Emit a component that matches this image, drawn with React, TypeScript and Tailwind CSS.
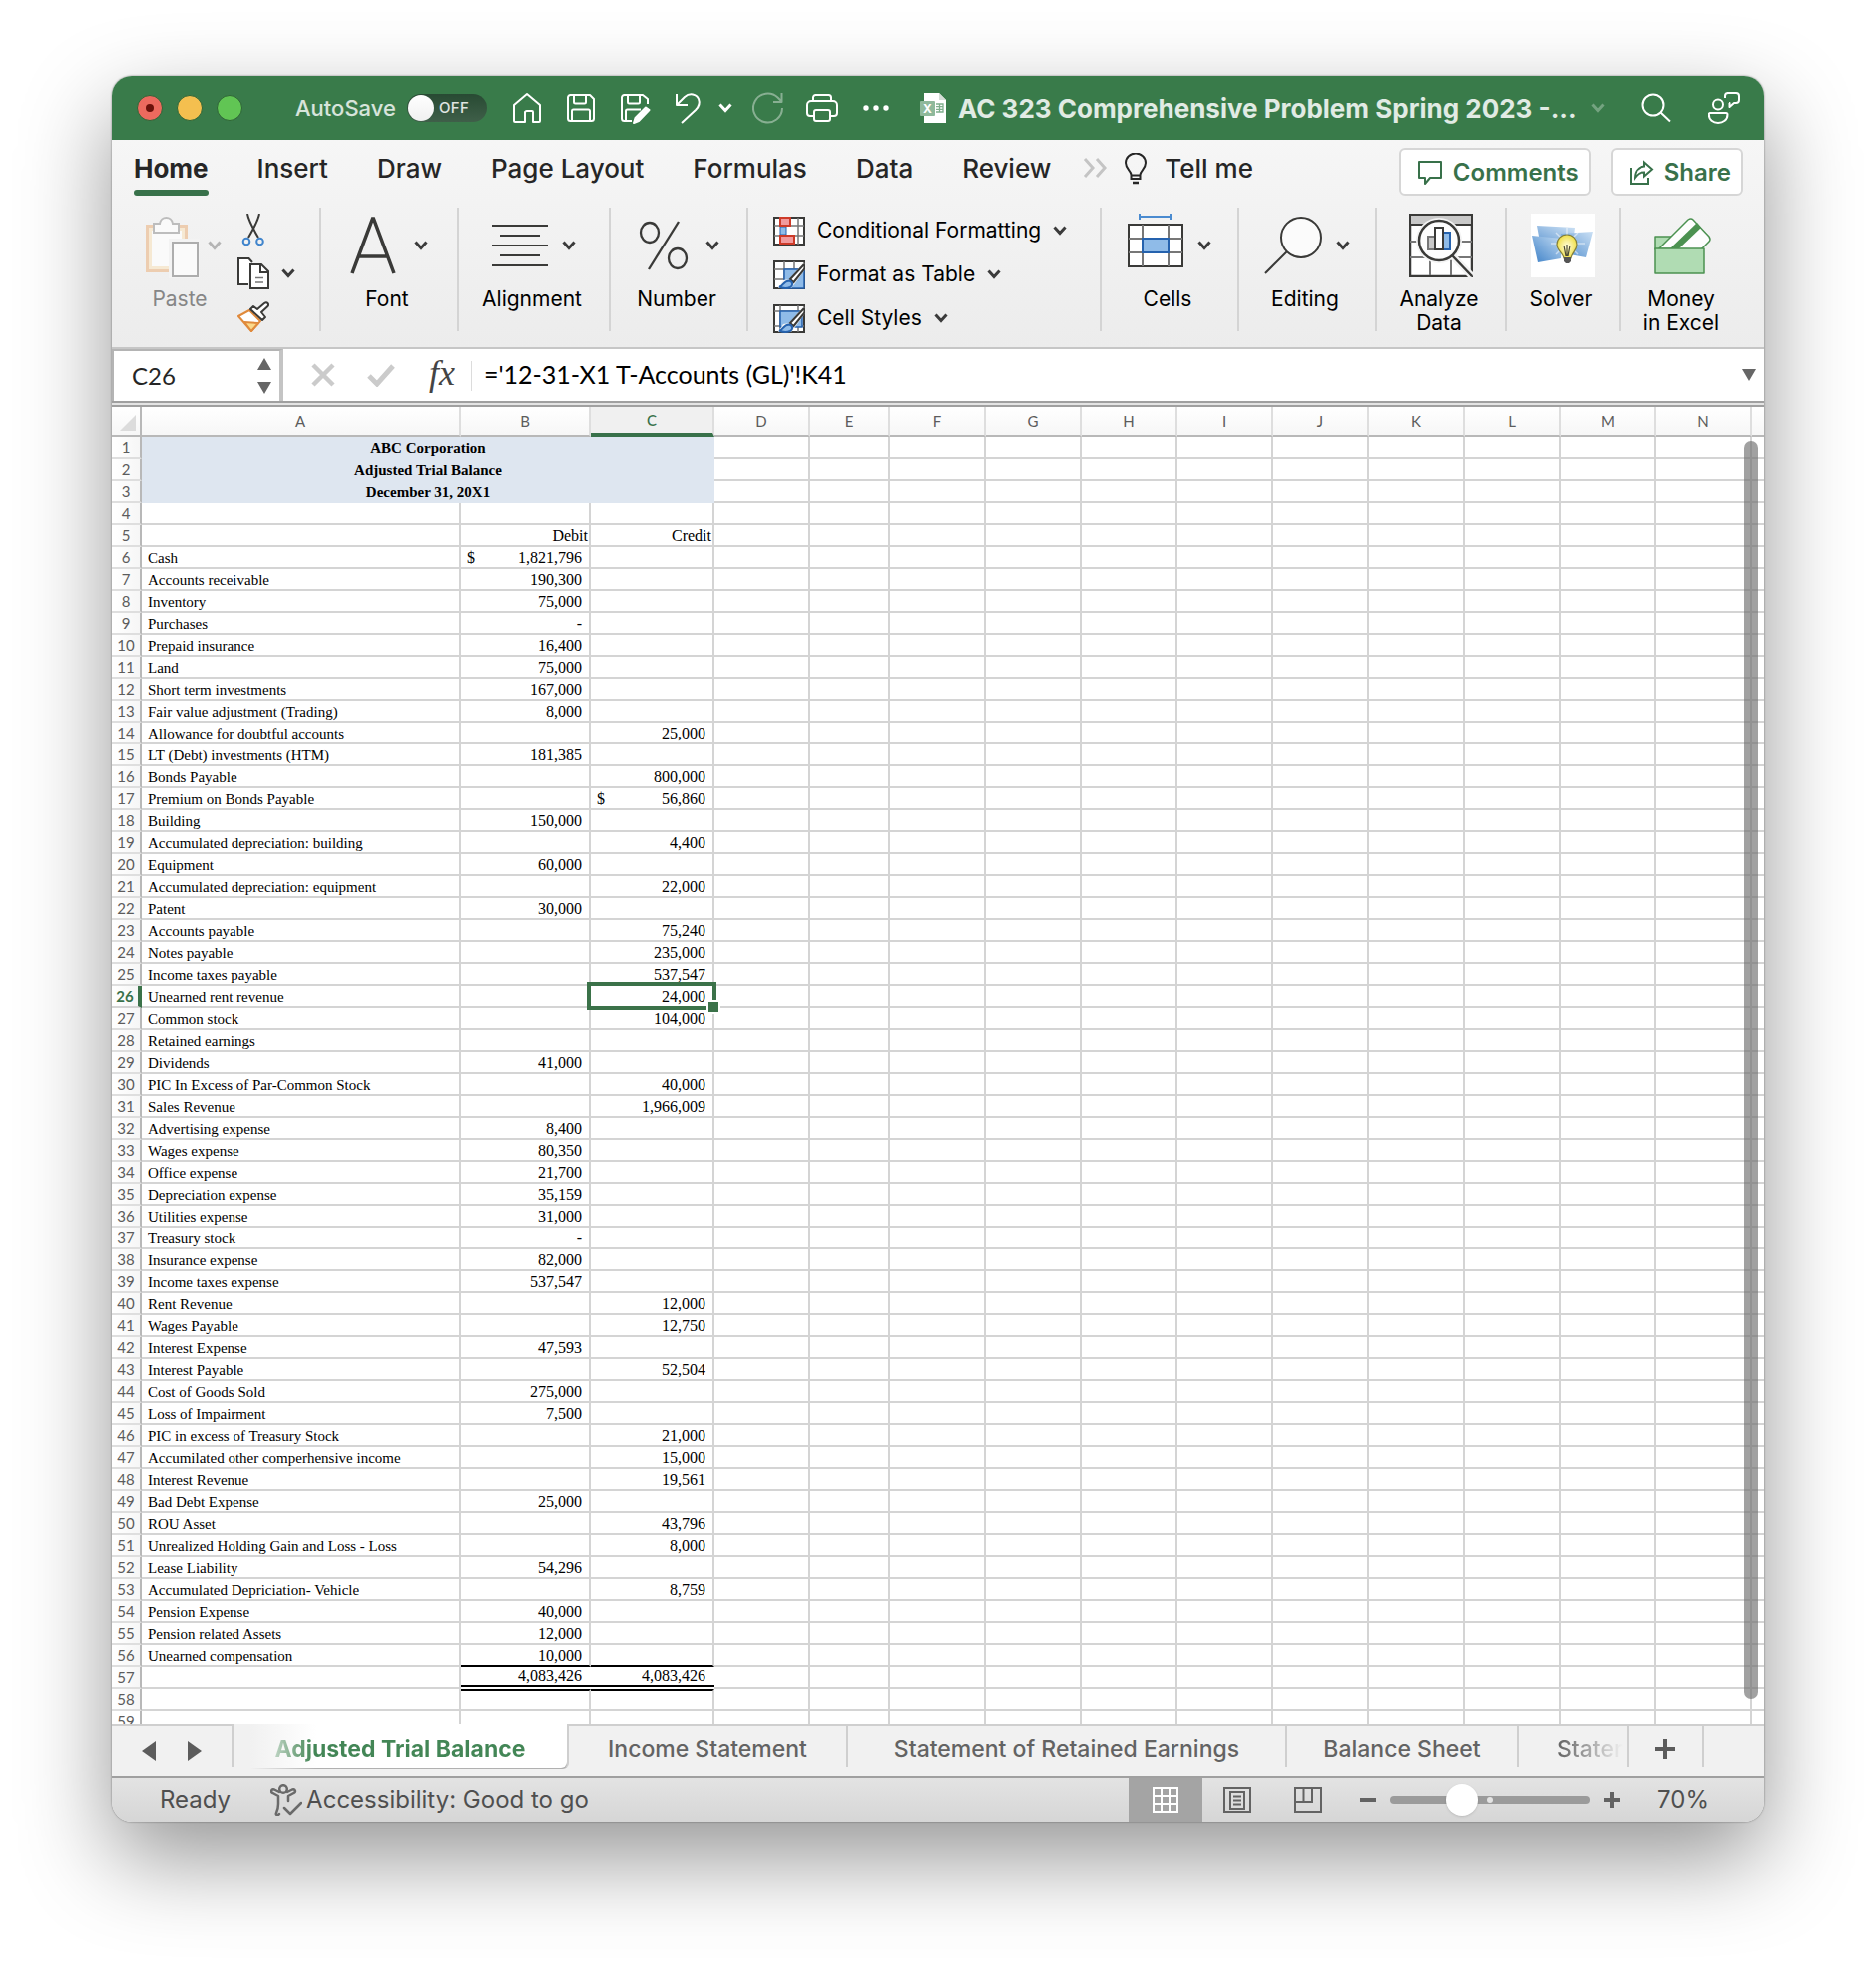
import type { ReactNode } from 'react'

type Entry = {
  label?: string
  debit?: string
  credit?: string
  debitSign?: boolean
  creditSign?: boolean
}

const entries: Entry[] = [
  { label: 'Cash', debit: '1,821,796', debitSign: true },
  { label: 'Accounts receivable', debit: '190,300' },
  { label: 'Inventory', debit: '75,000' },
  { label: 'Purchases', debit: '-' },
  { label: 'Prepaid insurance', debit: '16,400' },
  { label: 'Land', debit: '75,000' },
  { label: 'Short term investments', debit: '167,000' },
  { label: 'Fair value adjustment (Trading)', debit: '8,000' },
  { label: 'Allowance for doubtful accounts', credit: '25,000' },
  { label: 'LT (Debt) investments (HTM)', debit: '181,385' },
  { label: 'Bonds Payable', credit: '800,000' },
  { label: 'Premium on Bonds Payable', credit: '56,860', creditSign: true },
  { label: 'Building', debit: '150,000' },
  { label: 'Accumulated depreciation: building', credit: '4,400' },
  { label: 'Equipment', debit: '60,000' },
  { label: 'Accumulated depreciation: equipment', credit: '22,000' },
  { label: 'Patent', debit: '30,000' },
  { label: 'Accounts payable', credit: '75,240' },
  { label: 'Notes payable', credit: '235,000' },
  { label: 'Income taxes payable', credit: '537,547' },
  { label: 'Unearned rent revenue', credit: '24,000' },
  { label: 'Common stock', credit: '104,000' },
  { label: 'Retained earnings' },
  { label: 'Dividends', debit: '41,000' },
  { label: 'PIC In Excess of Par-Common Stock', credit: '40,000' },
  { label: 'Sales Revenue', credit: '1,966,009' },
  { label: 'Advertising expense', debit: '8,400' },
  { label: 'Wages expense', debit: '80,350' },
  { label: 'Office expense', debit: '21,700' },
  { label: 'Depreciation expense', debit: '35,159' },
  { label: 'Utilities expense', debit: '31,000' },
  { label: 'Treasury stock', debit: '-' },
  { label: 'Insurance expense', debit: '82,000' },
  { label: 'Income taxes expense', debit: '537,547' },
  { label: 'Rent Revenue', credit: '12,000' },
  { label: 'Wages Payable', credit: '12,750' },
  { label: 'Interest Expense', debit: '47,593' },
  { label: 'Interest Payable', credit: '52,504' },
  { label: 'Cost of Goods Sold', debit: '275,000' },
  { label: 'Loss of Impairment', debit: '7,500' },
  { label: 'PIC in excess of Treasury Stock', credit: '21,000' },
  { label: 'Accumilated other comperhensive income', credit: '15,000' },
  { label: 'Interest Revenue', credit: '19,561' },
  { label: 'Bad Debt Expense', debit: '25,000' },
  { label: 'ROU Asset', credit: '43,796' },
  { label: 'Unrealized Holding Gain and Loss - Loss', credit: '8,000' },
  { label: 'Lease Liability', debit: '54,296' },
  { label: 'Accumulated Depriciation- Vehicle', credit: '8,759' },
  { label: 'Pension Expense', debit: '40,000' },
  { label: 'Pension related Assets', debit: '12,000' },
  { label: 'Unearned compensation', debit: '10,000' },
]

const titles = ['ABC Corporation', 'Adjusted Trial Balance', 'December 31, 20X1']
const columns = ['A', 'B', 'C', 'D', 'E', 'F', 'G', 'H', 'I', 'J', 'K', 'L', 'M', 'N']
const columnWidths = [
  'w-[320px]', 'w-[130px]', 'w-[124px]', 'w-[96px]', 'w-[80px]', 'w-[96px]', 'w-[96px]',
  'w-[96px]', 'w-[96px]', 'w-[96px]', 'w-[96px]', 'w-[96px]', 'w-[96px]', 'w-[96px]',
]

const SELECTED_ROW = 26
const TOTAL_ROW = 57

function Chevron({ className = 'text-[#3b3b3b]' }: { className?: string }) {
  return (
    <svg viewBox="0 0 14 10" className={`h-2.5 w-3.5 shrink-0 ${className}`} fill="none" stroke="currentColor" strokeWidth="3">
      <path d="M1.5 1.5 7 7.5l5.5-6" />
    </svg>
  )
}

/* ---------- title bar ---------- */

function TitleIcon({ label, className = '', children }: { label: string; className?: string; children: ReactNode }) {
  return (
    <button type="button" aria-label={label} className={`shrink-0 ${className}`}>
      <svg viewBox="0 0 32 32" className="size-8" fill="none" stroke="currentColor" strokeWidth="2" strokeLinejoin="round">
        {children}
      </svg>
    </button>
  )
}

function TitleBar() {
  return (
    <header className="flex h-16 items-center bg-[#397b4a] pr-6 pl-[25px] text-white">
      <div className="flex gap-[14px]">
        <button type="button" aria-label="Close" className="flex size-[26px] items-center justify-center rounded-full border border-[#2f6437] bg-[#ec6a5e]">
          <span className="size-2 rounded-full bg-[#6b110a]" />
        </button>
        <button type="button" aria-label="Minimize" className="size-[26px] rounded-full border border-[#2f6437] bg-[#f4bf4f]" />
        <button type="button" aria-label="Zoom" className="size-[26px] rounded-full border border-[#2f6437] bg-[#61c554]" />
      </div>
      <span className="ml-[53px] text-[22px] font-medium text-white/80">AutoSave</span>
      <button
        type="button"
        role="switch"
        aria-checked="false"
        aria-label="AutoSave"
        className="ml-[11px] flex h-7 w-20 shrink-0 items-center rounded-full bg-linear-to-b from-[#284a33] to-[#3f5f49] px-px"
      >
        <span className="size-[26px] rounded-full bg-linear-to-b from-white to-[#f0f0f0]" />
        <span className="ml-[5px] text-[15px] font-medium tracking-wide text-white/85">OFF</span>
      </button>
      <div className="ml-6 flex items-center gap-[22px]">
        <TitleIcon label="Home">
          <path d="M3 13 16 2l13 11v16a1 1 0 0 1-1 1h-6V20a1 1 0 0 0-1-1h-5a2 2 0 0 0-2 1v10H4a1 1 0 0 1-1-1z" />
        </TitleIcon>
        <TitleIcon label="Save">
          <path d="M3 5.500a2.500 2.500 0 0 1 2.500-2.500H25l4 4v19.500a2.500 2.500 0 0 1-2.500 2.500h-21A2.500 2.500 0 0 1 3 26.500z" />
          <path d="M9 3v7a1.500 1.500 0 0 0 1.500 1.500h9A1.500 1.500 0 0 0 21 10V3M7 29V19a1.500 1.500 0 0 1 1.500-1.500h15A1.500 1.500 0 0 1 25 19v10" />
        </TitleIcon>
        <TitleIcon label="Save as">
          <path d="M13 29H5.500A2.500 2.500 0 0 1 3 26.500v-21A2.500 2.500 0 0 1 5.500 3H24l5 4v5" />
          <path d="M9 3v7a1.500 1.500 0 0 0 1.500 1.500h9A1.500 1.500 0 0 0 21 10V3M7 29V19a1.500 1.500 0 0 1 1.500-1.500H22" />
          <path d="M27 15.500 30.500 18 20 29l-5 2 1.500-5z" fill="currentColor" />
        </TitleIcon>
        <TitleIcon label="Undo">
          <path d="M4 2v11h11M4.500 12.500 12 5c5-4.500 12-3 14 2s0 8-3 11L9 31" />
        </TitleIcon>
      </div>
      <Chevron className="ml-[14px] text-white" />
      <div className="ml-5 flex items-center gap-[22px]">
        <TitleIcon label="Redo" className="text-white/40">
          <path d="M30 16A14.500 14.500 0 1 1 25.500 5.500L29 9M29.500 1v9H21" />
        </TitleIcon>
        <TitleIcon label="Print">
          <path d="M8 24H4a3 3 0 0 1-3-3v-8a4 4 0 0 1 4-4h22a4 4 0 0 1 4 4v8a3 3 0 0 1-3 3h-4" />
          <path d="M7 9V5.500A2.500 2.500 0 0 1 9.500 3h13A2.500 2.500 0 0 1 25 5.500V9M8 20a2 2 0 0 1 2-2h12a2 2 0 0 1 2 2v7a2 2 0 0 1-2 2H10a2 2 0 0 1-2-2z" />
        </TitleIcon>
        <TitleIcon label="More commands">
          <g fill="currentColor" stroke="none">
            <circle cx="6" cy="16" r="2.700" />
            <circle cx="16" cy="16" r="2.700" />
            <circle cx="26" cy="16" r="2.700" />
          </g>
        </TitleIcon>
      </div>
      <svg viewBox="0 0 26 30" className="ml-7 h-[30px] w-[26px] shrink-0">
        <path d="M4 0h15l7 7v23H4z" fill="#fff" />
        <path d="M19 0v7h7z" fill="#d5ddd7" />
        <path d="M16 11h7v8h-7M16 13.700h7M16 16.400h7M19.500 11v8" stroke="#7fae8c" strokeWidth="1.300" fill="none" />
        <rect y="8" width="15" height="15" rx="1" fill="#8fb99b" />
        <text x="7.500" y="20" textAnchor="middle" fontSize="12" fontWeight="700" fill="#fff">X</text>
      </svg>
      <h1 className="ml-3 min-w-0 truncate text-[26px] font-bold text-white/85">AC 323 Comprehensive Problem Spring 2023 -...</h1>
      <Chevron className="ml-[14px] text-white/30" />
      <div className="ml-auto flex items-center gap-9 pl-6">
        <TitleIcon label="Search">
          <circle cx="13" cy="13" r="10.500" />
          <path d="m20.500 20.500 9.500 9" />
        </TitleIcon>
        <TitleIcon label="Collaborate">
          <circle cx="10" cy="12.500" r="5" />
          <path d="M2 21h16a1.500 1.500 0 0 1 1.500 1.500C19.500 28 15 31 10 31S.800 28 .800 22.500A1.500 1.500 0 0 1 2 21zM19 1h9a3 3 0 0 1 3 3v4a3 3 0 0 1-3 3h-2l-4.500 4v-4H21M17 6V4a3 3 0 0 1 3-3" />
        </TitleIcon>
      </div>
    </header>
  )
}

/* ---------- ribbon ---------- */

const ribbonTabs = ['Insert', 'Draw', 'Page Layout', 'Formulas', 'Data', 'Review']

function RibbonTabs() {
  return (
    <div className="flex h-14 items-start pr-[21px]">
      <nav className="flex items-center gap-[49px] pl-[22px] text-[26px] leading-[58px] font-medium text-[#262626]">
        <button type="button" className="relative font-bold">
          Home
          <span className="absolute inset-x-0 bottom-[2px] h-[6px] rounded-full bg-[#38714a]" />
        </button>
        {ribbonTabs.map((tab) => (
          <button key={tab} type="button" className="whitespace-nowrap">
            {tab}
          </button>
        ))}
      </nav>
      <button type="button" aria-label="More tabs" className="mt-[18px] ml-8 text-[#c4c4c4]">
        <svg viewBox="0 0 24 20" className="h-5 w-6" fill="none" stroke="currentColor" strokeWidth="3">
          <path d="m2 1 8 9-8 9M14 1l8 9-8 9" />
        </svg>
      </button>
      <button type="button" className="ml-[18px] flex items-center gap-[18px] text-[26px] leading-[58px] font-medium whitespace-nowrap text-[#262626]">
        <svg viewBox="0 0 22 32" className="h-8 w-[22px]" fill="none" stroke="#262626" strokeWidth="2">
          <path d="M6.500 22c0-4-5.500-6-5.500-12a10 9.500 0 0 1 20 0c0 6-5.500 8-5.500 12v4h-9zM6.500 22.500h9" />
          <path d="M8 30h6" strokeWidth="2.500" />
        </svg>
        Tell me
      </button>
      <div className="mt-2 ml-auto flex gap-5 text-[24px] font-semibold text-[#38714a]">
        <button type="button" className="flex h-12 items-center gap-[10px] rounded-md border-2 border-[#d6d6d6] bg-white pt-[2px] pr-[10px] pl-4">
          <svg viewBox="0 0 26 26" className="size-[26px]" fill="none" stroke="currentColor" strokeWidth="2">
            <path d="M2 2h22v16H13l-5 6v-6H2z" strokeLinejoin="round" />
          </svg>
          Comments
        </button>
        <button type="button" className="flex h-12 items-center gap-[10px] rounded-md border-2 border-[#d6d6d6] bg-white pt-[2px] pr-[10px] pl-4">
          <svg viewBox="0 0 26 26" className="size-[26px]" fill="none" stroke="currentColor" strokeWidth="2">
            <path d="M2 8v16h18v-6" />
            <path d="M16 2.500 24 9.500l-8 7v-4C11 12.500 9 14 6 18c0-7 4-11 10-11.500z" />
          </svg>
          Share
        </button>
      </div>
    </div>
  )
}

type GroupProps = {
  width: string
  label: string
  menu?: boolean
  last?: boolean
  children: ReactNode
}

function RibbonGroup({ width, label, menu, last, children }: GroupProps) {
  return (
    <div className={`flex shrink-0 justify-center ${width} ${last ? '' : 'border-r-2 border-[#d4d4d4]'}`}>
      <button type="button" className="flex flex-col items-center pt-[6px]">
        <span className="flex h-16 shrink-0 items-center gap-[14px]">
          {children}
          {menu && <Chevron />}
        </span>
        <span className="mt-[10px] mr-1 text-[21px] leading-6 whitespace-pre-line text-black">{label}</span>
      </button>
    </div>
  )
}

function BrushOverlay() {
  return (
    <>
      <path d="M31 4 16 21l-6 1-5 8h13l4-5L32 11z" fill="#f3f3f3" />
      <path d="M30.500 6.500 17 21l3.500 3L31 11c1-2 .500-4-.500-4.500z" fill="#fff" stroke="#3a3a38" strokeWidth="2" />
      <path d="M6 28.500c4 0 4-6 10-6 4 1 4 5 1 6.500-4 1.800-8 1-11-.500z" fill="#8fbbe8" stroke="#2562ae" strokeWidth="2" />
    </>
  )
}

const styleMenus = [
  {
    label: 'Conditional Formatting',
    icon: (
      <>
        <path d="M1 3h30v27H1z" fill="#fff" stroke="#3a3a38" strokeWidth="2" />
        <path d="M1 11h30M1 21h30M25 3v27" stroke="#777" strokeWidth="1.500" />
        <path d="M7 12h6v8H7z" fill="#8fbbe8" stroke="#2562ae" strokeWidth="1" />
        <path d="M7 3h10v8H7zM7 21h14v8H7z" fill="#f19a9d" stroke="#cd3a28" strokeWidth="2" />
      </>
    ),
  },
  {
    label: 'Format as Table',
    icon: (
      <>
        <path d="M1 3h30v27H1z" fill="#fff" stroke="#3a3a38" strokeWidth="2" />
        <path d="M1 11h30M1 21h10M11 3v27M21 3v8" stroke="#777" strokeWidth="1.500" />
        <path d="M11 11h20v19H11z" fill="#8fbbe8" stroke="#2562ae" strokeWidth="1.500" />
        <BrushOverlay />
      </>
    ),
  },
  {
    label: 'Cell Styles',
    icon: (
      <>
        <path d="M1 3h30v27H1z" fill="#fff" stroke="#3a3a38" strokeWidth="2" />
        <path d="M1 9h30M1 24h30M7 3v27M25 3v27" stroke="#777" strokeWidth="1.500" />
        <path d="M7 9h22v16H7z" fill="#8fbbe8" stroke="#2562ae" strokeWidth="1.500" />
        <BrushOverlay />
      </>
    ),
  },
]

function Ribbon() {
  return (
    <div className="mt-3 flex h-[124px]">
      <div className="flex w-[210px] shrink-0 border-r-2 border-[#d4d4d4] pl-[34px]">
        <button type="button" className="flex w-[76px] flex-col items-center pt-[6px]">
          <span className="flex h-16 shrink-0 items-center gap-2">
            <svg viewBox="0 0 54 62" className="mt-1 h-[62px] w-[54px]" fill="none">
              <path d="M1.500 9.500h39v45h-39z" fill="#f6e9d3" stroke="#edcdb0" strokeWidth="3" />
              <path d="M6 14h30v36H6z" fill="#fafafa" />
              <path d="M8 7h6c1-8 12-8 13 0h6v9H8z" fill="#fafafa" stroke="#bdbdbd" strokeWidth="2" />
              <path d="M23 22h31v40H23z" fill="#f3f3f3" />
              <path d="M27 26h25v34H27z" fill="#fafafa" stroke="#adadad" strokeWidth="2" />
            </svg>
            <Chevron className="text-[#b4b4b4]" />
          </span>
          <span className="mt-[10px] mr-2 text-[21px] leading-6 text-[#868686]">Paste</span>
        </button>
        <div className="ml-4 flex flex-col items-start gap-3 pt-[6px]">
          <button type="button" aria-label="Cut" className="h-8">
            <svg viewBox="0 0 32 32" className="size-8" fill="none" strokeWidth="2">
              <path d="M10 0c1 6 4 12 11 24M22 0c-1 6-4 12-11 24" stroke="#3a3a38" />
              <circle cx="9" cy="28" r="3.300" stroke="#4185cc" />
              <circle cx="22.500" cy="28" r="3.300" stroke="#4185cc" />
            </svg>
          </button>
          <button type="button" aria-label="Copy" className="flex h-8 items-center gap-3">
            <svg viewBox="0 0 32 32" className="size-8" fill="#fff" stroke="#3a3a38" strokeWidth="2">
              <path d="M15 5 11.500 1H1v26h10" />
              <path d="M13 7h11l7 7v17H13z" />
              <path d="M23 7v8h8" fill="none" />
              <path d="M18 20.500h8M18 25h8" strokeWidth="1.500" stroke="#777" />
            </svg>
            <Chevron />
          </button>
          <button type="button" aria-label="Format painter" className="h-8">
            <svg viewBox="0 0 32 32" className="size-8" strokeWidth="2" strokeLinejoin="round">
              <path d="M12 9 1 15l13 15 9-10z" fill="#fff" stroke="#e08a3c" />
              <path d="m7 21 7 9 7-8z" fill="#fbd98b" stroke="#e08a3c" />
              <path d="m13 8 3-3 4 3 7-6c3-2 5 1 3.500 3L24 11l4 5-3 3z" fill="#fff" stroke="#3a3a38" />
            </svg>
          </button>
        </div>
      </div>
      <RibbonGroup width="w-[138px]" label="Font" menu>
        <svg viewBox="0 0 50 58" className="h-[58px] w-[50px]" fill="none" stroke="#3a3a38" strokeWidth="3.500">
          <path d="M2 57 22.500 2h1L44 57M8.500 40h29" />
        </svg>
      </RibbonGroup>
      <RibbonGroup width="w-[152px]" label="Alignment" menu>
        <svg viewBox="0 0 56 44" className="h-11 w-14" fill="none" stroke="#3a3a38" strokeWidth="2">
          <path d="M0 2h56M8 12h40M0 22h56M8 32h40M0 42h56" />
        </svg>
      </RibbonGroup>
      <RibbonGroup width="w-[138px]" label="Number" menu>
        <svg viewBox="-1 0 54 50" className="h-[50px] w-[54px]" fill="none" stroke="#3a3a38" strokeWidth="2.300">
          <ellipse cx="11" cy="12" rx="9" ry="10" />
          <ellipse cx="39" cy="38" rx="9" ry="10" />
          <path d="M40 1 10 49" />
        </svg>
      </RibbonGroup>
      <div className="flex w-[354px] shrink-0 flex-col items-start gap-3 border-r-2 border-[#d4d4d4] pt-[7px] pl-[25px]">
        {styleMenus.map((menu) => (
          <button key={menu.label} type="button" className="flex h-8 items-center gap-3 text-[21px] whitespace-nowrap text-black">
            <svg viewBox="0 0 32 32" className="size-8" fill="none">
              {menu.icon}
            </svg>
            {menu.label}
            <Chevron />
          </button>
        ))}
      </div>
      <RibbonGroup width="w-[138px]" label="Cells" menu>
        <svg viewBox="0 0 56 64" className="h-16 w-14" fill="none">
          <path d="M12 3h31M12 0v6M43 0v6" stroke="#4a8bd0" strokeWidth="2" />
          <path d="M1 11h54v42H1z" fill="#fff" stroke="#3a3a38" strokeWidth="2" />
          <path d="M1 25h54M1 39h54M15 11v42M41 11v42" stroke="#777" strokeWidth="2" />
          <path d="M15 25h26v14H15z" fill="#8fbbe8" stroke="#2562ae" strokeWidth="2" />
        </svg>
      </RibbonGroup>
      <RibbonGroup width="w-[138px]" label="Editing" menu>
        <svg viewBox="0 0 58 58" className="size-[58px]" fill="none" stroke="#3a3a38" strokeWidth="2">
          <circle cx="37" cy="21" r="20" fill="#fbfbfb" />
          <path d="M23 35 1 57" />
        </svg>
      </RibbonGroup>
      <RibbonGroup width="w-[130px]" label={'Analyze\nData'}>
        <svg viewBox="0 0 64 64" className="size-16" fill="none">
          <path d="M1 1h62v62H1z" fill="#fff" stroke="#3a3a38" strokeWidth="2.500" />
          <path d="M2 2h60v8H2z" fill="#c8c8c8" />
          <path d="M1 11h62" stroke="#3a3a38" strokeWidth="2" />
          <path d="M1 28h62M1 44h62M21 44v18M42 44v18" stroke="#777" strokeWidth="2" />
          <circle cx="30" cy="27" r="23" fill="#f3f3f3" />
          <path d="m42 41 21 22" stroke="#f3f3f3" strokeWidth="7" />
          <circle cx="30" cy="27" r="20" fill="#fdfdfd" stroke="#3a3a38" strokeWidth="2.500" />
          <path d="m43 42 20 21" stroke="#3a3a38" strokeWidth="2.500" />
          <path d="M19 23h7v13h-7z" fill="#c8c8c8" stroke="#777" strokeWidth="2" />
          <path d="M34 19h7v17h-7z" fill="#8fbbe8" stroke="#2562ae" strokeWidth="2" />
          <path d="M26 14h8v22h-8z" fill="#fff" stroke="#3a3a38" strokeWidth="2" />
        </svg>
      </RibbonGroup>
      <RibbonGroup width="w-[114px]" label="Solver">
        <svg viewBox="0 0 64 64" className="size-16">
          <defs>
            <linearGradient id="panel" x1="0" y1="1" x2="1" y2="0">
              <stop offset="0" stopColor="#3f82c8" />
              <stop offset="1" stopColor="#c4dcf3" />
            </linearGradient>
            <radialGradient id="bulb">
              <stop offset="0" stopColor="#fffde0" />
              <stop offset="1" stopColor="#f0e04c" />
            </radialGradient>
          </defs>
          <path d="M0 0h64v64H0z" fill="#fff" />
          <path d="m6 12 38 2-2 16-33-2z" fill="url(#panel)" opacity=".8" />
          <path d="m30 20 32-2-7 26-22-4z" fill="url(#panel)" opacity=".9" />
          <path d="m1 22 30 3-1 20-23 4z" fill="url(#panel)" />
          <path d="M36 14v34M20 30h34M25 19l22 22M47 19 25 41" stroke="#fff" strokeOpacity=".5" strokeWidth="1.500" />
          <path d="M26 31a10 10 0 0 1 20 0c0 6-5 8-6 14h-7c-1-6-7-8-7-14z" fill="url(#bulb)" stroke="#85803a" strokeWidth="1.200" />
          <path d="m33 32 2 11M39 32l-2 11M36 31v12" stroke="#4c4a35" strokeWidth="1.200" />
          <path d="M33 44h7v4l-2 2h-3l-2-2z" fill="#555" />
        </svg>
      </RibbonGroup>
      <RibbonGroup width="w-[126px]" label={'Money\nin Excel'} last>
        <svg viewBox="0 0 58 58" className="size-[58px]" strokeLinejoin="round">
          <path d="M1 20h22l-8 13H1z" fill="#b0dcb3" stroke="#4b9150" strokeWidth="1.500" />
          <path d="M5 32 34 3q3-2 5 0l16 17q2 3 0 5l-8 8z" fill="#fdfdfd" stroke="#4b9150" strokeWidth="1.500" />
          <path d="m15 33 28-27 4 5-23 22z" fill="#4b9150" />
          <path d="M1 32h49v25H1z" fill="#b0dcb3" stroke="#4b9150" strokeWidth="1.500" />
        </svg>
      </RibbonGroup>
    </div>
  )
}

/* ---------- formula bar ---------- */

function FormulaBar() {
  return (
    <div className="flex h-[52px] items-stretch bg-white font-[Lato,sans-serif]">
      <div className="flex w-[172px] shrink-0 items-center border-t-2 border-r-4 border-l-2 border-t-[#b4b4b4] border-r-[#c4c4c4] border-l-[#b4b4b4] pr-2 pl-[18px]">
        <input aria-label="Name box" defaultValue="C26" className="w-full min-w-0 text-[24px] text-[#262626] outline-none" />
        <svg viewBox="0 0 14 36" className="h-9 w-3.5 shrink-0" fill="#666">
          <path d="M7 0l7 12H0zM7 36l7-12H0z" />
        </svg>
      </div>
      <button type="button" aria-label="Cancel" className="ml-7 text-[#cbcbcb]">
        <svg viewBox="0 0 24 24" className="size-6" fill="none" stroke="currentColor" strokeWidth="4.500">
          <path d="m2 2 20 20M22 2 2 22" />
        </svg>
      </button>
      <button type="button" aria-label="Enter" className="ml-8 text-[#cbcbcb]">
        <svg viewBox="0 0 28 24" className="h-6 w-7" fill="none" stroke="currentColor" strokeWidth="5">
          <path d="m2 13 8 8L26 3" />
        </svg>
      </button>
      <button type="button" aria-label="Insert function" className="ml-[34px] pb-1 font-['Liberation_Serif',serif] text-[36px] leading-none text-[#444] italic">
        fx
      </button>
      <span className="mt-3 ml-4 h-[30px] w-px bg-[#dcdcdc]" />
      <input
        aria-label="Formula"
        defaultValue="='12-31-X1 T-Accounts (GL)'!K41"
        className="ml-3 min-w-0 flex-1 text-[25px] text-black outline-none"
      />
      <button type="button" aria-label="Expand formula bar" className="mr-2">
        <svg viewBox="0 0 14 12" className="h-3 w-3.5" fill="#666">
          <path d="M0 0h14L7 12z" />
        </svg>
      </button>
    </div>
  )
}

/* ---------- worksheet ---------- */

const cellBox = 'h-[22px] border-r-2 border-b-2 p-0 pt-[2px] leading-[18px]'
const cell = `${cellBox} border-[#d4d4d4]`

function EmptyCells() {
  return (
    <>
      {columns.slice(3).map((col) => (
        <td key={col} className="h-[22px] border-r-2 border-b-2 border-[#d4d4d4] p-0" />
      ))}
      <td className="h-[22px] border-b-2 border-[#d4d4d4] p-0" />
    </>
  )
}

function RowNumber({ row }: { row: number }) {
  const selected = row === SELECTED_ROW
  return (
    <th
      scope="row"
      className={`h-[22px] bg-linear-to-r from-white to-[#f6f6f6] p-0 text-center font-[Lato,sans-serif] text-[15px] leading-5 ${
        selected
          ? 'border-r-4 border-b-2 border-r-[#3b7249] border-b-[#d4d4d4] font-bold text-[#38714a]'
          : 'border-r-2 border-b-2 border-r-[#b8b8b8] border-b-[#dedede] font-normal text-[#5c5c5c]'
      }`}
    >
      {row}
    </th>
  )
}

function Amount({ value, sign }: { value?: string; sign?: boolean }) {
  return (
    <div className="flex justify-end pr-[7px] pl-[6px] text-[16px]">
      {sign && <span className="mr-auto">$</span>}
      {value}
    </div>
  )
}

function Sheet() {
  return (
    <div className="relative bg-white">
      <table className="w-full table-fixed border-separate border-spacing-0 font-['Liberation_Serif',serif] text-[15px] text-black">
        <colgroup>
          <col className="w-[30px]" />
          {columnWidths.map((width, i) => (
            <col key={i} className={width} />
          ))}
          <col />
        </colgroup>
        <thead>
          <tr className="bg-linear-to-b from-white to-[#f6f6f6] font-[Lato,sans-serif] text-[15px]">
            <th className="h-[30px] border-r-2 border-b-2 border-[#b8b8b8] p-0">
              <svg viewBox="0 0 28 28" className="size-7" fill="#dcdcdc">
                <path d="M24 8v16H8z" />
              </svg>
            </th>
            {columns.map((col) => (
              <th
                key={col}
                scope="col"
                className={`p-0 pt-px ${
                  col === 'C'
                    ? 'border-r-2 border-b-4 border-r-[#dedede] border-b-[#38714a] bg-[#f0f0f0] font-medium text-[#38714a]'
                    : 'border-r-2 border-b-2 border-r-[#dedede] border-b-[#b8b8b8] font-normal text-[#5c5c5c]'
                }`}
              >
                {col}
              </th>
            ))}
            <th className="border-b-2 border-[#b8b8b8] p-0" />
          </tr>
        </thead>
        <tbody>
          {titles.map((title, i) => (
            <tr key={title}>
              <RowNumber row={i + 1} />
              <td colSpan={3} className="h-[22px] bg-[#dee6f0] p-0 text-center leading-5 font-bold">
                {title}
              </td>
              <EmptyCells />
            </tr>
          ))}
          <tr>
            <RowNumber row={4} />
            <td className={cell} />
            <td className={cell} />
            <td className={cell} />
            <EmptyCells />
          </tr>
          <tr>
            <RowNumber row={5} />
            <td className={cell} />
            <td className={`${cell} pr-px text-right text-[16px]`}>Debit</td>
            <td className={`${cell} pr-px text-right text-[16px]`}>Credit</td>
            <EmptyCells />
          </tr>
          {entries.map((entry, i) => {
            const row = i + 6
            const amountCell = row === TOTAL_ROW - 1 ? `${cellBox} border-r-[#d4d4d4] border-b-black` : cell
            return (
              <tr key={row}>
                <RowNumber row={row} />
                <td className={`${cell} pl-[6px] whitespace-nowrap`}>{entry.label}</td>
                <td className={amountCell}>
                  <Amount value={entry.debit} sign={entry.debitSign} />
                </td>
                <td className={`${amountCell} relative`}>
                  <Amount value={entry.credit} sign={entry.creditSign} />
                  {row === SELECTED_ROW && (
                    <>
                      <span className="absolute -inset-1 z-10 border-4 border-[#3b7249]" />
                      <span className="absolute -right-[6px] -bottom-[6px] z-10 size-[10px] bg-[#3b7249] ring-2 ring-white" />
                    </>
                  )}
                </td>
                <EmptyCells />
              </tr>
            )
          })}
          <tr>
            <RowNumber row={TOTAL_ROW} />
            <td className={cell} />
            {['Debit', 'Credit'].map((side) => (
              <td key={side} className="h-[22px] border-b-2 border-white p-0 leading-5 shadow-[inset_0_-2px_0_#000]">
                <div className="pr-[9px] pb-[2px] text-right text-[16px] leading-[18px]">4,083,426</div>
              </td>
            ))}
            <EmptyCells />
          </tr>
          <tr>
            <RowNumber row={58} />
            <td className={cell} />
            <td className="border-t-2 border-r-2 border-b-2 border-t-black border-r-[#d4d4d4] border-b-[#d4d4d4] p-0" />
            <td className="border-t-2 border-r-2 border-b-2 border-t-black border-r-[#d4d4d4] border-b-[#d4d4d4] p-0" />
            <EmptyCells />
          </tr>
          <tr>
            <th scope="row" className="border-r-2 border-[#b8b8b8] p-0 text-center font-[Lato,sans-serif] text-[15px] font-normal text-[#5c5c5c]">
              <div className="h-[14px] overflow-hidden leading-5">59</div>
            </th>
            {columns.map((col) => (
              <td key={col} className="border-r-2 border-[#d4d4d4] p-0" />
            ))}
            <td className="p-0" />
          </tr>
        </tbody>
      </table>
      <div className="absolute top-[34px] right-[6px] bottom-[26px] w-[14px] rounded-full bg-[#6e6e6e]/65" />
    </div>
  )
}

/* ---------- sheet tabs and status bar ---------- */

const sheetTabs = [
  { label: 'Income Statement', width: 'w-[280px]' },
  { label: 'Statement of Retained Earnings', width: 'w-[440px]' },
  { label: 'Balance Sheet', width: 'w-[232px]' },
]

function SheetTabs() {
  return (
    <div className="flex h-[54px] items-start border-b-2 border-[#a0a0a0] bg-[#f1f1f1] text-[23px] font-medium text-[#636363]">
      <div className="flex h-[43px] w-[122px] shrink-0 items-center justify-center gap-8 border-t-2 border-r-2 border-[#cfcfcf] pt-2">
        <button type="button" aria-label="Previous sheet">
          <svg viewBox="0 0 14 20" className="h-5 w-3.5" fill="#5c5c5c">
            <path d="M14 0v20L0 10z" />
          </svg>
        </button>
        <button type="button" aria-label="Next sheet">
          <svg viewBox="0 0 14 20" className="h-5 w-3.5" fill="#5c5c5c">
            <path d="M0 0v20l14-10z" />
          </svg>
        </button>
      </div>
      <button
        type="button"
        className="h-[45px] w-[336px] shrink-0 rounded-br-md border-r-2 border-[#cfcfcf] bg-linear-to-r from-[#b0b0b0]/0 from-5% to-[#b0b0b0] to-25% pb-px whitespace-nowrap"
      >
        <span className="block h-11 rounded-br-md bg-linear-to-r from-[#f1f1f1] from-5% to-white to-25% pt-2">
          <span className="bg-linear-to-r from-[#bcd3c2] to-[#438656] to-15% bg-clip-text font-bold text-transparent">Adjusted Trial Balance</span>
        </span>
      </button>
      {sheetTabs.map((tab) => (
        <button key={tab.label} type="button" className={`h-[43px] shrink-0 border-t-2 border-r-2 border-[#cfcfcf] pt-[6px] whitespace-nowrap ${tab.width}`}>
          {tab.label}
        </button>
      ))}
      <button type="button" className="h-[43px] w-[110px] shrink-0 overflow-hidden border-t-2 border-r-2 border-[#cfcfcf] pt-[6px] pl-[38px] text-left whitespace-nowrap">
        <span className="bg-linear-to-r from-[#636363] to-[#f1f1f1] bg-clip-text text-transparent">Stater</span>
      </button>
      <button type="button" aria-label="Add sheet" className="flex h-[43px] w-[76px] shrink-0 items-center justify-center border-t-2 border-r-2 border-[#cfcfcf] pt-1">
        <svg viewBox="0 0 20 20" className="size-5" fill="none" stroke="#5c5c5c" strokeWidth="4">
          <path d="M10 0v20M0 10h20" />
        </svg>
      </button>
      <div className="h-[43px] flex-1 border-t-2 border-[#cfcfcf]" />
    </div>
  )
}

function StatusBar() {
  return (
    <footer className="flex h-11 items-center bg-linear-to-b from-[#e3e3e3] to-[#d6d6d6] text-[24px] text-[#4f4f4f]">
      <span className="ml-12">Ready</span>
      <button type="button" className="ml-10 flex items-center gap-1 whitespace-nowrap">
        <svg viewBox="0 0 32 32" className="size-8" fill="none" stroke="#6a6a6a" strokeWidth="2.500" strokeLinecap="round" strokeLinejoin="round">
          <circle cx="13" cy="5" r="3.800" />
          <path d="M9 8 4 5.500C1 4.500 0 8 2.500 9L8 12v8c0 5-1 7-2 9s1.500 3 3 1M17 8l5-2.500c3-1 4 2.500 1.500 3.500L18 12v5" />
          <path d="m14 24 6 6L31 19" />
        </svg>
        Accessibility: Good to go
      </button>
      <div className="ml-auto flex h-full items-center">
        <button type="button" aria-label="Normal view" className="flex h-full w-[74px] items-center justify-center bg-[#a4a4a4]">
          <svg viewBox="0 0 26 26" className="size-[26px]" fill="none" stroke="#fff" strokeWidth="2">
            <path d="M1 1h24v24H1zM1 9h24M1 17h24M9 1v24M17 1v24" />
          </svg>
        </button>
        <button type="button" aria-label="Page layout view" className="ml-[21px]">
          <svg viewBox="0 0 28 28" className="size-7" fill="none" stroke="#636363" strokeWidth="2">
            <path d="M1 2h26v24H1zM7 6h14v17H7zM10 10.500h8M10 14.500h8M10 18.500h8" />
          </svg>
        </button>
        <button type="button" aria-label="Page break preview" className="ml-[43px]">
          <svg viewBox="0 0 28 28" className="size-7" fill="none" stroke="#636363" strokeWidth="2">
            <path d="M1 2h26v24H1zM1 16h17V2M9.500 2v14" />
          </svg>
        </button>
        <button type="button" aria-label="Zoom out" className="ml-[38px]">
          <svg viewBox="0 0 16 16" className="size-4" fill="none" stroke="#636363" strokeWidth="4">
            <path d="M0 8h16" />
          </svg>
        </button>
        <div className="relative ml-[14px] flex w-[200px] items-center">
          <input
            type="range"
            aria-label="Zoom level"
            defaultValue={33}
            className="h-2 w-full appearance-none rounded-full bg-[#9b9b9b] [&::-webkit-slider-thumb]:relative [&::-webkit-slider-thumb]:size-8 [&::-webkit-slider-thumb]:appearance-none [&::-webkit-slider-thumb]:rounded-full [&::-webkit-slider-thumb]:bg-white [&::-webkit-slider-thumb]:shadow"
          />
          <span className="absolute left-1/2 size-[6px] -translate-x-1/2 rounded-full bg-[#e4e4e4]" />
        </div>
        <button type="button" aria-label="Zoom in" className="ml-[14px]">
          <svg viewBox="0 0 16 16" className="size-4" fill="none" stroke="#636363" strokeWidth="4">
            <path d="M8 0v16M0 8h16" />
          </svg>
        </button>
        <span className="mr-[55px] ml-[38px]">70%</span>
      </div>
    </footer>
  )
}

export default function App() {
  return (
    <div className="min-h-screen bg-white px-28 pt-[76px] pb-[148px] font-[Inter,sans-serif]">
      <main className="overflow-hidden rounded-[20px] shadow-[0_0_2px_rgba(0,0,0,0.5),0_36px_90px_rgba(0,0,0,0.42)]">
        <TitleBar />
        <section className="border-b-2 border-[#c6c6c6] bg-linear-to-b from-[#f6f6f6] to-[#ececec] pb-4">
          <RibbonTabs />
          <Ribbon />
        </section>
        <FormulaBar />
        <div className="h-[6px] border-y-2 border-[#a0a0a0] bg-[#e4e4e4]" />
        <Sheet />
        <SheetTabs />
        <StatusBar />
      </main>
    </div>
  )
}
